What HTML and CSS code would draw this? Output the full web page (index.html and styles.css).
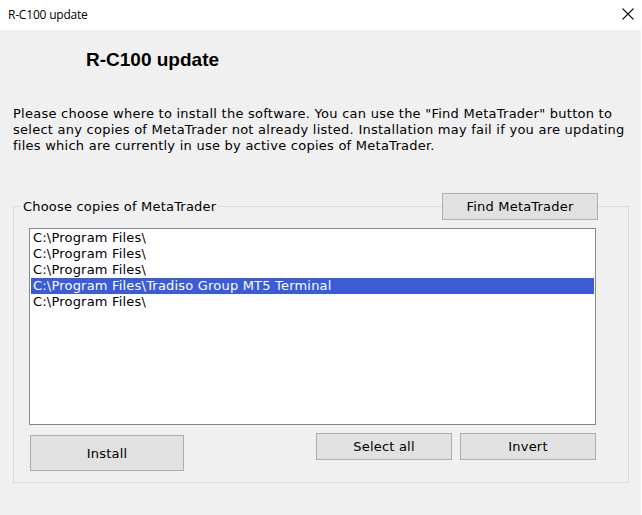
FILE: index.html
```html
<!DOCTYPE html>
<html>
<head>
<meta charset="utf-8">
<link rel="stylesheet" href="styles.css">
</head>
<body>
<div class="window">
  <div class="titlebar">
    <span class="title">R-C100 update</span>
    <svg class="close" width="12" height="12" viewBox="0 0 12 12"><path d="M0.5 0.5 L11.5 11.5 M11.5 0.5 L0.5 11.5" stroke="#111" stroke-width="1.1" fill="none"/></svg>
  </div>
  <div class="client">
    <h1 class="heading">R-C100 update</h1>
    <p class="intro">Please choose where to install the software. You can use the "Find MetaTrader" button to select any copies of MetaTrader not already listed. Installation may fail if you are updating files which are currently in use by active copies of MetaTrader.</p>
    <div class="group">
      <div class="group-head">
        <span class="legend">Choose copies of MetaTrader</span>
        <button class="btn btn-find">Find MetaTrader</button>
      </div>
      <ul class="listbox">
        <li>C:\Program Files\</li>
        <li>C:\Program Files\</li>
        <li>C:\Program Files\</li>
        <li class="selected">C:\Program Files\Tradiso Group MT5 Terminal</li>
        <li>C:\Program Files\</li>
      </ul>
      <div class="actions">
        <button class="btn btn-install">Install</button>
        <div class="actions-right">
          <button class="btn btn-small">Select all</button>
          <button class="btn btn-small">Invert</button>
        </div>
      </div>
    </div>
  </div>
</div>
</body>
</html>
```
FILE: styles.css
```css
* { box-sizing: border-box; }
html, body { margin: 0; padding: 0; background: #fff; }
.window {
  width: 642px;
  height: 515px;
  display: flex;
  flex-direction: column;
  font-family: "DejaVu Sans", Verdana, sans-serif;
  color: #000;
}
.titlebar {
  height: 30px;
  background: #fff;
  display: flex;
  align-items: center;
  justify-content: space-between;
  padding: 0 8px 0 8px;
}
.title {
  font-family: "Open Sans", "Noto Sans", sans-serif;
  font-size: 12px;
  letter-spacing: -0.2px;
  color: #000;
  margin-top: -2px;
}
.close { margin-right: 0px; margin-top: -2px; }
.client {
  flex: 1;
  background: #f0f0f0;
  margin-right: 1px;
  padding: 0 13px 0 13px;
  display: flex;
  flex-direction: column;
}
.heading {
  font-family: "Liberation Sans", Arial, sans-serif;
  font-weight: bold;
  font-size: 19px;
  margin: 19px 0 0 73px;
  line-height: 22px;
}
.intro {
  font-size: 13px;
  line-height: 16px;
  margin: 35px 0 0 0;
  letter-spacing: 0.25px;
}
.group {
  margin-top: 52px;
  width: 616px;
  height: 277px;
  border: 1px solid #dcdcdc;
  padding: 0 29px 0 15px;
  display: flex;
  flex-direction: column;
}
.group-head {
  height: 26px;
  margin-top: -14px;
  display: flex;
  align-items: center;
  justify-content: space-between;
}
.legend {
  background: #f0f0f0;
  font-size: 13px;
  padding: 0 2px 0 2px;
  margin-left: -8px;
  letter-spacing: 0.2px;
}
.btn {
  font-family: "DejaVu Sans", Verdana, sans-serif;
  font-size: 13px;
  letter-spacing: 0.2px;
  color: #000;
  background: #e1e1e1;
  border: 1px solid #adadad;
  padding: 0;
  margin: 0;
}
.btn-find { width: 156px; height: 27px; margin-right: 1px; }
.listbox {
  list-style: none;
  margin: 9px 0 0 0;
  padding: 1px;
  width: 567px;
  height: 197px;
  background: #fff;
  border: 1px solid #828790;
  font-size: 13px;
  letter-spacing: 0.2px;
}
.listbox li {
  height: 16px;
  line-height: 16px;
  padding-left: 2px;
  white-space: nowrap;
}
.listbox li.selected {
  background: #3c5bd7;
  color: #fff;
}
.actions {
  display: flex;
  justify-content: space-between;
  align-items: flex-start;
  margin-top: 10px;
  padding-left: 1px;
}
.btn-install { width: 154px; height: 36px; }
.actions-right { display: flex; gap: 8px; margin-right: 3px; margin-top: -2px; }
.btn-small { width: 136px; height: 27px; }
```
